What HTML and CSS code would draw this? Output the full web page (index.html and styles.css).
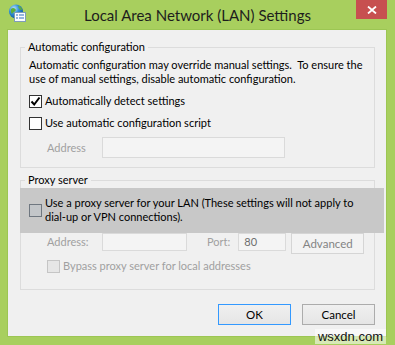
FILE: index.html
```html
<!DOCTYPE html>
<html lang="en">
<head>
    <meta charset="UTF-8">
    <meta name="viewport" content="width=device-width, initial-scale=1.0">
    <title>Local Area Network (LAN) Settings</title>
    <link rel="stylesheet" href="styles.css">
</head>
<body>
    <div class="window">
        <div class="titlebar">
            <svg class="app-icon" width="20" height="20" viewBox="0 0 20 20">
                <defs>
                    <radialGradient id="globe" cx="0.35" cy="0.3" r="0.8">
                        <stop offset="0" stop-color="#bfe6ff"/>
                        <stop offset="0.45" stop-color="#2f8fd8"/>
                        <stop offset="1" stop-color="#0b4f8f"/>
                    </radialGradient>
                </defs>
                <circle cx="8" cy="8.5" r="7" fill="url(#globe)"/>
                <path d="M3 6 C5 4 7 5 8 7 C7 9 5 9 4 11 C3 10 2.5 8 3 6 Z" fill="#5dae3a"/>
                <path d="M10 3 C12 3 14 5 14 7 C12 7 11 6 10 3 Z" fill="#5dae3a"/>
                <rect x="6.5" y="9.5" width="11" height="9" fill="#fbfdff" stroke="#7f9db9"/>
                <rect x="8" y="11.5" width="2" height="1" fill="#2f6fc0"/>
                <rect x="11" y="11.5" width="5" height="1" fill="#2f6fc0"/>
                <rect x="8" y="14.5" width="2" height="1" fill="#2f6fc0"/>
                <rect x="11" y="14.5" width="5" height="1" fill="#2f6fc0"/>
            </svg>
            <div class="title">Local Area Network (LAN) Settings</div>
            <div class="close">
                <svg width="10" height="8" viewBox="0 0 10 8">
                    <path d="M1 0.5 L9 7.5 M9 0.5 L1 7.5" stroke="#fff" stroke-width="1.8"/>
                </svg>
            </div>
        </div>

        <div class="client">
            <fieldset class="group">
                <legend>Automatic configuration</legend>
                <p class="note">Automatic configuration may override manual settings.&nbsp; To ensure the<br>use of manual settings, disable automatic configuration.</p>
                <div class="option option-first">
                    <span class="check checked">
                        <svg width="11" height="11" viewBox="0 0 11 11">
                            <path d="M1.5 5.5 L4.2 8.5 L9.5 1.5" fill="none" stroke="#000" stroke-width="2"/>
                        </svg>
                    </span>
                    <span>Automatically detect settings</span>
                </div>
                <div class="option">
                    <span class="check"></span>
                    <span>Use automatic configuration script</span>
                </div>
                <div class="field-row is-disabled">
                    <span class="field-label">Address</span>
                    <span class="textbox textbox-script"></span>
                </div>
            </fieldset>

            <fieldset class="group group-proxy">
                <legend>Proxy server</legend>
                <div class="option highlight">
                    <span class="check"></span>
                    <span>Use a proxy server for your LAN (These settings will not apply to<br>dial-up or VPN connections).</span>
                </div>
                <div class="field-row field-row-proxy is-disabled">
                    <span class="field-label">Address:</span>
                    <span class="textbox textbox-address"></span>
                    <span class="field-label port-label">Port:</span>
                    <span class="textbox textbox-port">80</span>
                    <button class="btn btn-advanced" disabled>Advanced</button>
                </div>
                <div class="option option-bypass is-disabled">
                    <span class="check"></span>
                    <span>Bypass proxy server for local addresses</span>
                </div>
            </fieldset>

            <div class="actions">
                <button class="btn btn-default">OK</button>
                <button class="btn">Cancel</button>
            </div>
        </div>

        <div class="watermark">wsxdn.com</div>
    </div>
</body>
</html>
```

FILE: styles.css
```css
body {
    margin: 0;
    padding: 0;
    font-family: 'Lato', 'Noto Sans', sans-serif;
    font-size: 11px;
    color: #000;
}

.window {
    position: relative;
    width: 395px;
    height: 345px;
    box-sizing: border-box;
    background-color: #a8cf5e;
    display: flex;
    flex-direction: column;
}

.titlebar {
    height: 30px;
    display: grid;
    grid-template-columns: 1fr auto 1fr;
}

.app-icon {
    margin: 3px 0 0 8px;
}

.title {
    font-size: 15px;
    line-height: 30px;
    color: #1d1d1d;
}

.close {
    justify-self: end;
    width: 31px;
    height: 19px;
    margin-right: 8px;
    background-color: #c75050;
    display: flex;
    align-items: center;
    justify-content: center;
}

.client {
    margin: 0 9px 9px 8px;
    height: 306px;
    box-sizing: border-box;
    background-color: #f0f0f0;
    box-shadow: 0 0 0 1px #9cc653;
    padding: 10px 11px 11px 12px;
    display: flex;
    flex-direction: column;
}

.group {
    margin: 0;
    padding: 4px 8px 9px;
    border: 1px solid #dcdcdc;
    min-width: 0;
}

.group legend {
    margin-left: -4px;
    padding: 0 3px;
    line-height: 14px;
}

.group-proxy {
    margin-top: 5px;
    padding-top: 0;
    padding-bottom: 16px;
}

.note {
    margin: 0;
    line-height: 14px;
    white-space: nowrap;
}

.option {
    display: flex;
    align-items: center;
    gap: 3px;
    line-height: 14px;
    margin-top: 8px;
    white-space: nowrap;
}

.check {
    width: 11px;
    height: 11px;
    border: 1px solid #333;
    background-color: #fff;
    display: flex;
    align-items: center;
    justify-content: center;
    flex-shrink: 0;
}

.highlight {
    margin: 1px -18px 0 -9px;
    padding: 8px 0 9px 9px;
    background-color: #c8c8c8;
}

.highlight .check {
    border-color: #6f7780;
    background-color: #c3c6c9;
}

.option-bypass {
    margin-top: 5px;
    padding-left: 18px;
}

.field-row {
    display: flex;
    align-items: flex-start;
    margin-top: 7px;
    padding-left: 18px;
}

.field-row-proxy {
    margin-top: 0;
}

.field-label {
    width: 55px;
    line-height: 21px;
}

.field-row-proxy .field-label {
    line-height: 18px;
}

.port-label {
    width: auto;
    margin-left: 20px;
    margin-right: 8px;
}

.is-disabled {
    color: #a0a0a0;
}

.is-disabled .check {
    border-color: #c5c5c5;
    background-color: #e6e6e6;
}

.textbox {
    box-sizing: border-box;
    border: 1px solid #dadada;
    background-color: #f4f4f4;
}

.textbox-script {
    width: 183px;
    height: 21px;
}

.textbox-address {
    width: 85px;
    height: 18px;
}

.textbox-port {
    width: 48px;
    height: 18px;
    padding-left: 5px;
    line-height: 16px;
    color: #6d6d6d;
}

.btn {
    width: 73px;
    height: 21px;
    padding: 0;
    font-family: inherit;
    font-size: 11.5px;
    color: #000;
    border: 1px solid #acacac;
    background: linear-gradient(#f0f0f0, #e5e5e5);
}

.btn-advanced {
    margin-left: 5px;
    color: #838383;
    border-color: #d5d5d5;
    background: #f3f3f3;
}

.btn-default {
    border-color: #3399ff;
}

.actions {
    display: flex;
    justify-content: flex-end;
    gap: 11px;
    margin-top: 14px;
}

.watermark {
    position: absolute;
    right: 9px;
    bottom: 1px;
    padding: 0 3px;
    font-family: 'Liberation Sans', sans-serif;
    font-size: 13px;
    line-height: 15px;
    color: #111;
    background-color: rgba(255, 255, 255, 0.55);
}
```
